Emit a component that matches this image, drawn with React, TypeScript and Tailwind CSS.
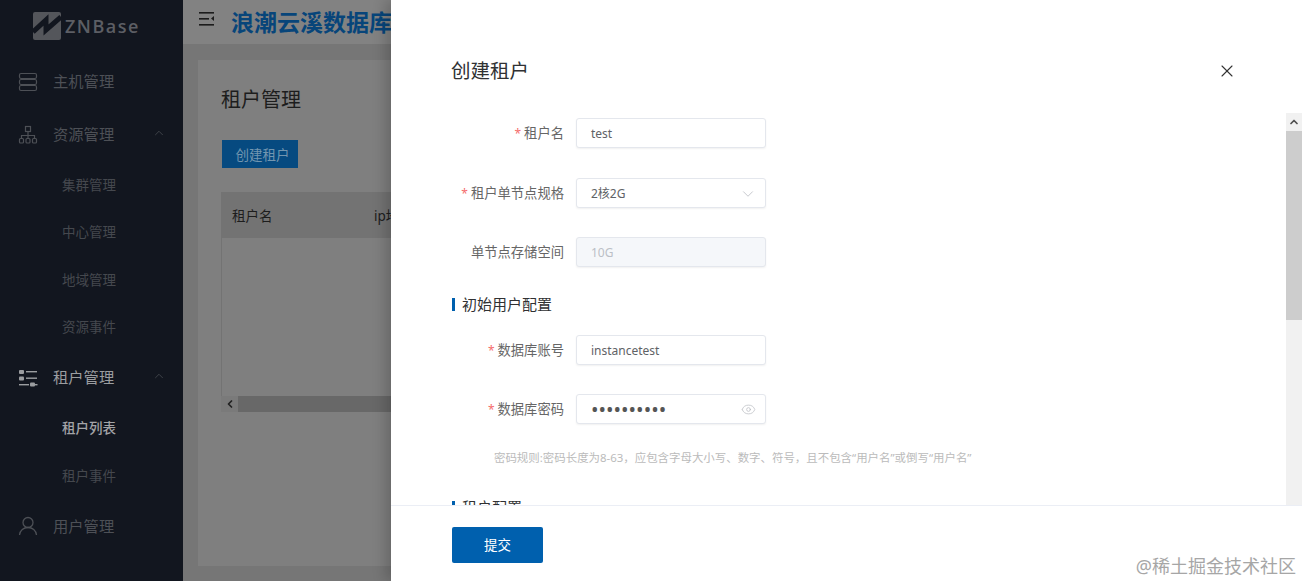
import { ChevronDown, ChevronLeft, ChevronUp, Eye, X } from 'lucide-react';
import type { ReactNode } from 'react';

const cjk = "font-['Noto_Sans','Noto_Sans_CJK_SC',sans-serif]";

function ServerIcon() {
  return (
    <svg width="20" height="20" viewBox="0 0 20 20" fill="none" stroke="currentColor" strokeWidth="1.2">
      <rect x="1.5" y="1.5" width="17" height="5" rx="1.5" />
      <rect x="1.5" y="7.5" width="17" height="5" rx="1.5" />
      <rect x="1.5" y="13.5" width="17" height="5" rx="1.5" />
    </svg>
  );
}

function TreeIcon() {
  return (
    <svg width="20" height="20" viewBox="0 0 20 20" fill="none" stroke="currentColor" strokeWidth="1.2">
      <rect x="7.5" y="1.5" width="5" height="5" />
      <path d="M10 6.5v4M3.5 13.5v-3h13v3M10 10.5v3" />
      <rect x="1.5" y="13.5" width="4" height="4.5" rx="1" />
      <rect x="8" y="13.5" width="4" height="4.5" rx="1" />
      <rect x="14.5" y="13.5" width="4" height="4.5" rx="1" />
    </svg>
  );
}

function SlidersIcon() {
  return (
    <svg width="20" height="20" viewBox="0 0 20 20" fill="currentColor">
      <rect x="1" y="2" width="5" height="4" rx="1" />
      <rect x="8" y="3" width="11" height="1.4" />
      <rect x="1" y="8.5" width="5" height="4" rx="1" />
      <rect x="8" y="9.5" width="11" height="1.4" />
      <rect x="1" y="16" width="10" height="1.4" />
      <rect x="12" y="14.5" width="5" height="4" rx="1" />
      <rect x="17" y="16" width="2.5" height="1.4" />
    </svg>
  );
}

function UserIcon() {
  return (
    <svg width="20" height="20" viewBox="0 0 20 20" fill="none" stroke="currentColor" strokeWidth="1.3">
      <circle cx="10" cy="6.5" r="5" />
      <path d="M1.5 19c.5-4.5 4-7.5 8.500-7.500s8 3 8.500 7.500" />
    </svg>
  );
}

function Logo() {
  return (
    <div className="flex items-center h-[55px] pl-[33px] pb-[3px] shrink-0">
      <svg width="28" height="28" viewBox="0 0 28 28">
        <rect width="28" height="28" rx="2" fill="#54565b" />
        <path d="M0 20L13 8v10L28 5" fill="none" stroke="#12161f" strokeWidth="5" />
      </svg>
      <span className="ml-[4px] font-['Open_Sans',sans-serif] font-semibold text-[18px] tracking-[1.5px] text-[#5c5e64]">ZNBase</span>
    </div>
  );
}

function TopItem({ icon, label, open, active }: { icon: ReactNode; label: string; open?: boolean; active?: boolean }) {
  return (
    <div className={`flex items-center h-[53px] pl-[18px] ${active ? 'text-[#9b9da0]' : 'text-[#4d5056]'}`}>
      <span className="w-[20px] flex justify-center">{icon}</span>
      <span className="ml-[15px] text-[15.300px]">{label}</span>
      {open && <ChevronUp size={14} strokeWidth={1.5} className="ml-[38px] -mt-[4px] text-[#44474d]" />}
    </div>
  );
}

function SubItem({ label, active }: { label: string; active?: boolean }) {
  return (
    <div className={`flex items-center h-[47.600px] pl-[62px] text-[13.500px] ${active ? 'text-[#a3a4a7] font-medium' : 'text-[#45484e]'}`}>
      {label}
    </div>
  );
}

function Sidebar() {
  return (
    <aside className="w-[183px] shrink-0 h-full bg-[#12161f] flex flex-col">
      <Logo />
      <TopItem icon={<ServerIcon />} label="主机管理" />
      <TopItem icon={<TreeIcon />} label="资源管理" open />
      <SubItem label="集群管理" />
      <SubItem label="中心管理" />
      <SubItem label="地域管理" />
      <SubItem label="资源事件" />
      <TopItem icon={<SlidersIcon />} label="租户管理" open active />
      <SubItem label="租户列表" active />
      <SubItem label="租户事件" />
      <TopItem icon={<UserIcon />} label="用户管理" />
    </aside>
  );
}

function TenantPage() {
  return (
    <main className="flex-1 min-w-0 h-full flex flex-col bg-[#767676]">
      <header className="h-[44px] shrink-0 bg-[#828282] flex items-center pl-[16px] whitespace-nowrap">
        <svg width="16" height="14" viewBox="0 0 16 14" fill="#1c1c1c" className="-mt-[6px]">
          <rect x="0" y="0" width="15" height="1.600" />
          <rect x="0" y="6" width="10" height="1.600" />
          <rect x="0" y="12" width="15" height="1.600" />
          <path d="M15 4v5l-3-2.500z" />
        </svg>
        <span className="ml-[16px] text-[23px] font-bold text-[#07457a]">浪潮云溪数据库管理平台</span>
      </header>
      <div className="flex-1 min-h-0 pt-[16px] pb-[15px] pl-[15px]">
        <div className="h-full bg-[#7f7f7f] pl-[23px] pt-[24px]">
          <h1 className="text-[20px] leading-[30px] pt-[1px] h-[30px] text-[#1d1d1d]">租户管理</h1>
          <button className="mt-[26px] ml-[1px] w-[76px] h-[28px] pt-[2px] pl-[5px] bg-[#064a80] text-[13.500px] text-[#7296b0]">创建租户</button>
          <div className="mt-[24px] border-l border-[#737373]">
            <div className="h-[46px] pt-[2px] bg-[#737373] flex items-center text-[13.500px] text-[#1d1d1d] whitespace-nowrap">
              <span className="w-[152px] pl-[10px]">租户名</span>
              <span>ip地址</span>
            </div>
            <div className="h-[158px]" />
          </div>
          <div className="flex h-[16px] bg-[#7a7a7a]">
            <span className="w-[17px] flex items-center justify-center text-[#222]">
              <ChevronLeft size={12} strokeWidth={3.500} />
            </span>
            <span className="flex-1 bg-[#686868]" />
          </div>
        </div>
      </div>
    </main>
  );
}

function Field({ label, required, children }: { label: string; required?: boolean; children: ReactNode }) {
  return (
    <div className="flex items-center h-[30px]">
      <label className="w-[173px] pt-[1px] text-right text-[13.300px] text-[#666]">
        {required && <span className="text-[#f56c6c] mr-[3px] text-[12px]">*</span>}
        {label}
      </label>
      <div className="ml-[12px]">{children}</div>
    </div>
  );
}

function Box({ disabled, children }: { disabled?: boolean; children: ReactNode }) {
  return (
    <div className={`w-[190px] h-[30px] rounded-[3px] border border-[#e4e7ed] shadow-[0_1px_2px_rgba(0,0,0,0.06)] flex items-center justify-between pl-[14px] pr-[9px] pt-[1px] text-[12px] ${disabled ? 'bg-[#f5f7fa] text-[#bbbfc6]' : 'bg-white text-[#606266]'}`}>
      {children}
    </div>
  );
}

function SectionTitle({ children }: { children: ReactNode }) {
  return (
    <div className="flex items-center ml-[61px] h-[20px] text-[15px] text-[#303133]">
      <span className="w-[3px] h-[13px] bg-[#0060ae] mr-[7px]" />
      {children}
    </div>
  );
}

function Scrollbar() {
  return (
    <div className="w-[16px] shrink-0 bg-[#f1f1f1] flex flex-col">
      <span className="h-[18px] flex items-center justify-center text-[#505050]">
        <ChevronUp size={12} strokeWidth={3.500} />
      </span>
      <span className="h-[189px] bg-[#cdcdcd]" />
    </div>
  );
}

function CreateDrawer() {
  return (
    <section className="absolute top-0 right-0 bottom-0 w-[911px] bg-white flex flex-col shadow-[-6px_0_12px_rgba(0,0,0,0.18)]">
      <div className="h-[113px] shrink-0 flex justify-between pl-[60px] pr-[65px] pt-[56px]">
        <h2 className="text-[19.500px] leading-[28px] h-[28px] pt-[1px] text-[#303133]">创建租户</h2>
        <X size={20} strokeWidth={1.300} className="mt-[5px] text-[#333]" />
      </div>
      <div className="flex-1 min-h-0 flex">
        <div className="flex-1 min-w-0 overflow-hidden pt-[5px]">
          <Field label="租户名" required>
            <Box>test</Box>
          </Field>
          <div className="h-[30px]" />
          <Field label="租户单节点规格" required>
            <Box>
              2核2G
              <ChevronDown size={18} strokeWidth={1} className="-mr-[1px] text-[#b4b7bd]" />
            </Box>
          </Field>
          <div className="h-[29px]" />
          <Field label="单节点存储空间">
            <Box disabled>10G</Box>
          </Field>
          <div className="h-[27px]" />
          <SectionTitle>初始用户配置</SectionTitle>
          <div className="h-[21px]" />
          <Field label="数据库账号" required>
            <Box>instancetest</Box>
          </Field>
          <div className="h-[29px]" />
          <Field label="数据库密码" required>
            <Box>
              <span className="text-[20px] leading-[20px] text-[#555]">••••••••••</span>
              <Eye size={15} strokeWidth={1.100} className="text-[#b4b7bd]" />
            </Box>
          </Field>
          <p className="mt-[25px] ml-[103px] text-[11.450px] leading-[18px] text-[#bbb] whitespace-nowrap">
            密码规则:密码长度为8-63，应包含字母大小写、数字、符号，且不包含“用户名”或倒写“用户名”
          </p>
          <div className="h-[30px]" />
          <SectionTitle>租户配置</SectionTitle>
        </div>
        <Scrollbar />
      </div>
      <footer className="h-[76px] shrink-0 border-t border-[#ebeef5] pl-[61px] pt-[21px]">
        <button className="w-[91px] h-[36px] rounded-[2px] bg-[#0060ae] text-white text-[13.500px]">提交</button>
      </footer>
    </section>
  );
}

export default function App() {
  return (
    <div className={`relative flex h-[581px] overflow-hidden ${cjk}`}>
      <Sidebar />
      <TenantPage />
      <CreateDrawer />
      <span className="absolute right-[6px] bottom-[3px] text-[18px] leading-[24px] text-[#a6a6a6]">@稀土掘金技术社区</span>
    </div>
  );
}
